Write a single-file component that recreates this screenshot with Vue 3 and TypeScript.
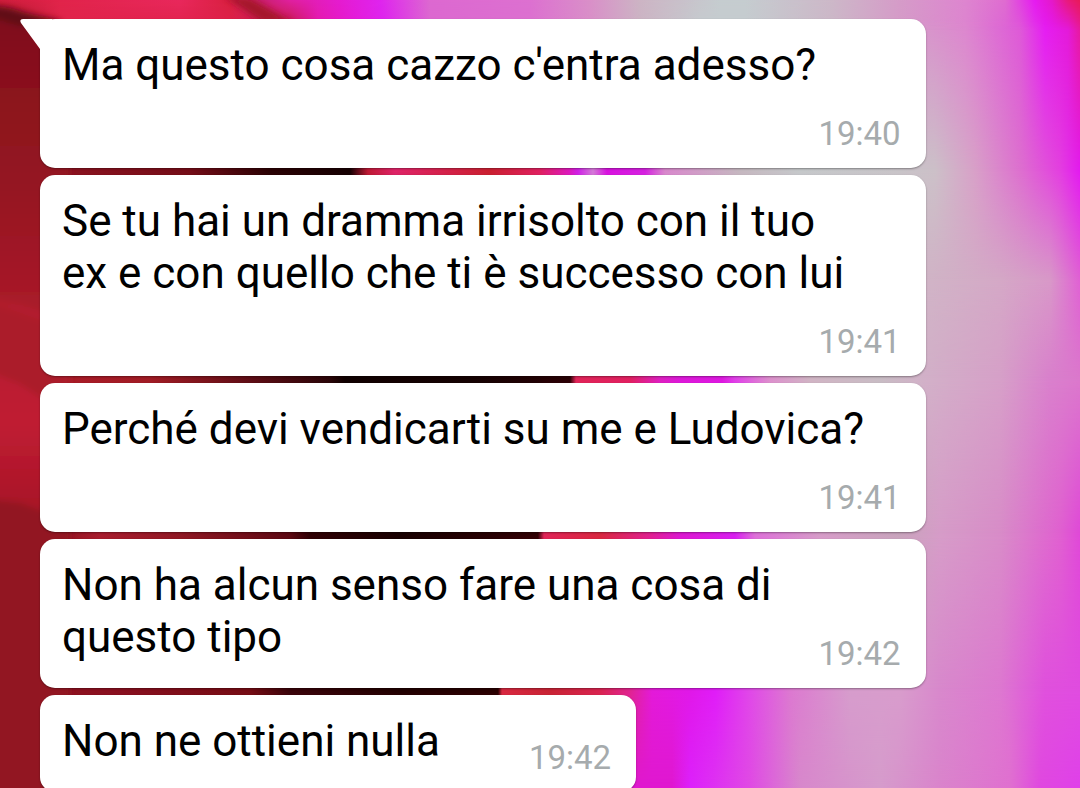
<script setup lang="ts">
interface Message {
  id: number
  lines: string[]
  time: string
  layout: 'stacked' | 'inline' | 'short'
  tail?: boolean
}

interface Band {
  y: number
  next: number
  stops: [number, string][]
}

const messages: Message[] = [
  { id: 1, lines: ["Ma questo cosa cazzo c'entra adesso?"], time: '19:40', layout: 'stacked', tail: true },
  { id: 2, lines: ['Se tu hai un dramma irrisolto con il tuo', 'ex e con quello che ti è successo con lui'], time: '19:41', layout: 'stacked' },
  { id: 3, lines: ['Perché devi vendicarti su me e Ludovica?'], time: '19:41', layout: 'stacked' },
  { id: 4, lines: ['Non ha alcun senso fare una cosa di', 'questo tipo'], time: '19:42', layout: 'inline' },
  { id: 5, lines: ['Non ne ottieni nulla'], time: '19:42', layout: 'short' },
]

// Wallpaper: horizontal colour bands, each fading into the one below it.
const bands: Band[] = [
  { y: 788, next: 789, stops: [[0, '#921520'], [110, '#8a1020'], [600, '#d82450'], [630, '#e018d0'], [672, '#e018d0'], [690, '#dd20fc'], [750, '#e04ae4'], [800, '#d888cc'], [880, '#d69ccc'], [940, '#da84cc'], [1010, '#e070d0'], [1040, '#e048e0'], [1080, '#e040ea']] },
  { y: 691, next: 788, stops: [[0, '#921520'], [110, '#8a1020'], [250, '#740c14'], [290, '#38040a'], [400, '#200000'], [498, '#280000'], [502, '#d82840'], [550, '#c82434'], [600, '#d82450'], [630, '#e02490'], [652, '#e31ad8'], [690, '#e018e8'], [715, '#e01cf8'], [750, '#e048e8'], [790, '#dc78d0'], [850, '#d69ccc'], [900, '#d89ccc'], [940, '#d888cc'], [1000, '#dd78d0'], [1045, '#e050dd'], [1080, '#e04ce0']] },
  { y: 535, next: 691, stops: [[0, '#901420'], [60, '#901420'], [100, '#a81c2e'], [180, '#901824'], [290, '#5c0812'], [310, '#300004'], [400, '#180000'], [538, '#300004'], [544, '#e02458'], [600, '#d82840'], [650, '#e02090'], [680, '#dc18d0'], [735, '#d820f0'], [755, '#dd70d8'], [820, '#d69cc8'], [900, '#c8a4bc'], [940, '#d69cc8'], [1000, '#d88cc8'], [1060, '#e060d0'], [1080, '#e048d8']] },
  { y: 379, next: 535, stops: [[0, '#bf1c33'], [40, '#ab1b28'], [150, '#a01c25'], [250, '#5e0d15'], [330, '#2a0508'], [345, '#100000'], [470, '#150202'], [570, '#280004'], [576, '#e02458'], [630, '#e02060'], [660, '#dd20c0'], [680, '#dc18d8'], [722, '#dd18e0'], [735, '#e040e8'], [770, '#dc90cc'], [810, '#d0b4c4'], [880, '#c8bcc4'], [926, '#d2b0c8'], [1000, '#d6a0c8'], [1050, '#d980cc'], [1080, '#db78cc']] },
  { y: 280, next: 379, stops: [[0, '#a81828'], [40, '#a01825'], [400, '#300004'], [700, '#d888cc'], [926, '#d0b4c6'], [1000, '#d4a8c6'], [1050, '#d898c8'], [1080, '#e060d4']] },
  { y: 171, next: 280, stops: [[0, '#8f1320'], [60, '#8c1320'], [190, '#740d18'], [270, '#2a0204'], [350, '#150002'], [368, '#c01a35'], [395, '#e02468'], [490, '#cc2030'], [540, '#e02060'], [570, '#dd18c0'], [578, '#d020e8'], [593, '#d47ad8'], [607, '#d810e0'], [645, '#d520e0'], [665, '#d888cc'], [740, '#c5b8c0'], [800, '#c5c8ca'], [900, '#c8c4c8'], [935, '#ccc0c8'], [975, '#d8a0c8'], [1020, '#dd70cf'], [1060, '#e33fe0'], [1080, '#e31af0']] },
  { y: 20, next: 171, stops: [[0, '#86121d'], [60, '#e0244a'], [230, '#e0204c'], [290, '#c01838'], [318, '#e518a8'], [355, '#e51bd8'], [385, '#de24ee'], [430, '#dc68d0'], [530, '#dc70d0'], [590, '#d98fc8'], [640, '#ccb4c4'], [700, '#c5cccf'], [745, '#c5cccf'], [830, '#ccb8c8'], [900, '#d59bc8'], [965, '#dd85cf'], [1020, '#de58d8'], [1045, '#e51af4'], [1068, '#e418d8'], [1080, '#e81a98']] },
  { y: 0, next: 30, stops: [[0, '#d01c3c'], [60, '#e0244a'], [180, '#e8285c'], [230, '#d82040'], [260, '#c8206c'], [290, '#e020a0'], [340, '#e51bd0'], [380, '#de24ee'], [430, '#dc68d0'], [530, '#dc70d0'], [590, '#d98fc8'], [640, '#ccb4c4'], [720, '#c5cccf'], [745, '#c5cccf'], [830, '#ccb8c8'], [900, '#d59bc8'], [965, '#dd85cf'], [1005, '#de6cd0'], [1035, '#e51af0'], [1052, '#e418c8'], [1068, '#e81a78'], [1080, '#e81a58']] },
]
</script>

<template>
  <main class="chat">
    <svg class="wallpaper" viewBox="0 0 1080 788" preserveAspectRatio="none" aria-hidden="true">
      <defs>
        <filter id="soft" x="-20%" y="-50%" width="140%" height="200%"><feGaussianBlur stdDeviation="3" /></filter>
        <linearGradient id="edge-top" gradientUnits="userSpaceOnUse" x1="0" y1="0" x2="0" y2="300">
          <stop offset="0" stop-color="#7c101a" />
          <stop offset="0.35" stop-color="#8d121e" />
          <stop offset="0.6" stop-color="#941521" />
          <stop offset="1" stop-color="#a81a29" />
        </linearGradient>
        <linearGradient id="edge-middle" gradientUnits="userSpaceOnUse" x1="0" y1="290" x2="0" y2="510">
          <stop offset="0" stop-color="#b01c2c" />
          <stop offset="0.6" stop-color="#c01c33" />
          <stop offset="1" stop-color="#a81627" />
        </linearGradient>
        <template v-for="(band, i) in bands" :key="i">
          <linearGradient :id="`band-${i}`" gradientUnits="userSpaceOnUse" x1="0" y1="0" x2="1080" y2="0">
            <stop v-for="[x, color] in band.stops" :key="x" :offset="x / 1080" :stop-color="color" />
          </linearGradient>
          <linearGradient :id="`fade-${i}`" gradientUnits="userSpaceOnUse" x1="0" :y1="band.y" x2="0" :y2="band.next">
            <stop offset="0" stop-color="#fff" />
            <stop offset="1" stop-color="#fff" stop-opacity="0" />
          </linearGradient>
          <mask :id="`mask-${i}`" maskUnits="userSpaceOnUse" x="0" y="0" width="1080" height="788">
            <rect width="1080" height="788" :fill="`url(#fade-${i})`" />
          </mask>
        </template>
      </defs>
      <rect v-for="(_, i) in bands" :key="i" width="1080" height="788" :fill="`url(#band-${i})`" :mask="i ? `url(#mask-${i})` : undefined" />
      <g filter="url(#soft)">
        <path d="M-20 4L60 20L70 60V340H-20Z" fill="url(#edge-top)" />
        <path d="M-20 4L10 8L56 22L20 26L-20 14Z" fill="#600c16" />
        <path d="M224 -4L250 -2L292 22H262Z" fill="#a5122c" />
        <path d="M-20 296L20 304L70 320V520L-20 510Z" fill="url(#edge-middle)" />
        <path d="M-20 368L20 384L70 416V330L-20 300Z" fill="#ab1b29" />
        <path d="M-20 498L20 503L50 514L70 516V820H-20Z" fill="#921520" />
      </g>
    </svg>

    <ol class="messages">
      <li v-for="message in messages" :key="message.id" class="bubble" :class="message.layout">
        <svg v-if="message.tail" class="tail" viewBox="0 0 32 32" aria-hidden="true">
          <path d="M32 0H3Q-1 0 1 4L20 30V32H32Z" fill="#fff" />
        </svg>
        <p class="text">
          <span v-for="line in message.lines" :key="line" class="line">{{ line }}</span>
        </p>
        <time class="time">{{ message.time }}</time>
      </li>
    </ol>
  </main>
</template>

<style>
body {
  margin: 0;
}
</style>

<style scoped>
.chat {
  position: relative;
  height: 100vh;
  overflow: hidden;
  background: #921520;
  font-family: Roboto, "Liberation Sans", sans-serif;
}

.wallpaper {
  position: absolute;
  inset: 0;
  width: 100%;
  height: 100%;
}

.messages {
  position: relative;
  display: flex;
  flex-direction: column;
  gap: 7px;
  width: 82%;
  margin: 0;
  padding: 19px 0 0 40px;
  list-style: none;
}

.bubble {
  position: relative;
  display: flex;
  justify-content: space-between;
  align-items: flex-end;
  padding: 20px 25px 14px 22px;
  border-radius: 15px;
  background: #fff;
  box-shadow: 0 1px 2px rgba(0, 0, 0, 0.35);
}

.stacked {
  flex-direction: column;
  align-items: stretch;
  gap: 12px;
}

.short {
  align-self: flex-start;
  gap: 89px;
}

.tail {
  position: absolute;
  top: 0;
  left: -20px;
  width: 32px;
  height: 32px;
}

.text {
  margin: 0;
  padding-bottom: 11px;
  color: #000;
  font-size: 44px;
  line-height: 52px;
}

.line {
  display: block;
  white-space: nowrap;
}

.time {
  color: #a6abad;
  font-size: 33px;
  line-height: 40px;
  text-align: right;
}
</style>
